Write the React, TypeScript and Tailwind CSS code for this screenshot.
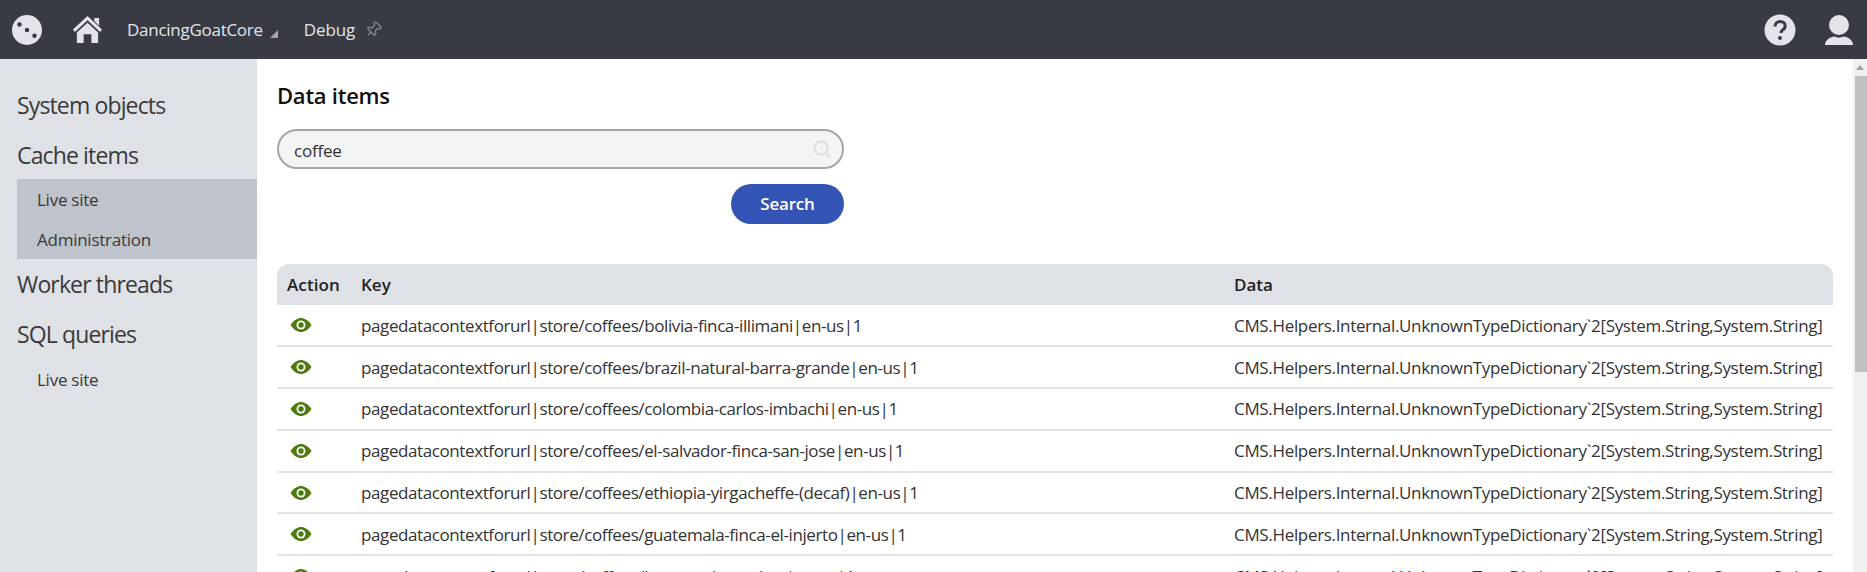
import React from 'react';
import { Search as SearchIcon, Pin } from 'lucide-react';

const keys = [
  'pagedatacontextforurl|store/coffees/bolivia-finca-illimani|en-us|1',
  'pagedatacontextforurl|store/coffees/brazil-natural-barra-grande|en-us|1',
  'pagedatacontextforurl|store/coffees/colombia-carlos-imbachi|en-us|1',
  'pagedatacontextforurl|store/coffees/el-salvador-finca-san-jose|en-us|1',
  'pagedatacontextforurl|store/coffees/ethiopia-yirgacheffe-(decaf)|en-us|1',
  'pagedatacontextforurl|store/coffees/guatemala-finca-el-injerto|en-us|1',
  'pagedatacontextforurl|store/coffees/kenya-gakuyuni-aa|en-us|1',
];

const dataType = 'CMS.Helpers.Internal.UnknownTypeDictionary`2[System.String,System.String]';

const EyeIcon = () => (
  <svg viewBox="0 0 22 16" className="w-[22px] h-4" fill="none">
    <path d="M0.500 8C4 3 7.500 1 11 1S18 3 21.500 8C18 13 14.500 15 11 15S4 13 0.500 8Z" fill="#4c7a0f" />
    <circle cx="11" cy="8" r="4.500" fill="#fff" />
    <circle cx="11" cy="8" r="2.700" fill="#4c7a0f" />
  </svg>
);

const Logo = () => (
  <svg viewBox="0 0 32 32" className="w-[30px] h-[30px]">
    <circle cx="16" cy="16" r="16" fill="#e2e4e9" />
    <circle cx="8" cy="10" r="2.400" fill="#383b43" />
    <circle cx="16" cy="16" r="2.400" fill="#383b43" />
    <circle cx="24" cy="22" r="2.400" fill="#383b43" />
  </svg>
);

const HomeIcon = () => (
  <svg viewBox="0 0 32 30" className="w-[31px] h-[29px]">
    <path d="M16 1 L31 15 L29 17.500 L16 5.500 L3 17.500 L1 15 Z" fill="#e2e4e9" />
    <path d="M23 3h5v8l-5-4.700Z" fill="#e2e4e9" />
    <path d="M5 18 L16 8 L27 18 V29 H20 V20 H12 V29 H5 Z" fill="#e2e4e9" />
  </svg>
);

const HelpIcon = () => (
  <svg viewBox="0 0 32 32" className="w-8 h-8">
    <circle cx="16" cy="16" r="15.500" fill="#e2e4e9" />
    <path d="M11 12.500c0-3 2.200-5 5.200-5s5 1.800 5 4.500c0 2-1 3-2.600 4-1.200.8-1.600 1.400-1.600 3" fill="none" stroke="#383b43" strokeWidth="3" />
    <circle cx="16" cy="24" r="2" fill="#383b43" />
  </svg>
);

const UserIcon = () => (
  <svg viewBox="0 0 28 30" className="w-[28px] h-[30px]">
    <circle cx="14" cy="10" r="10" fill="#e2e4e9" />
    <path d="M0 30 C0 25 5 22 10 21.500 C12 23 16 23 18 21.500 C23 22 28 25 28 30 Z" fill="#e2e4e9" />
  </svg>
);

export default function App() {
  return (
    <div className="h-[572px] w-full overflow-hidden flex flex-col bg-white text-[#333] font-['Open_Sans','Noto_Sans',sans-serif]">
      <header className="h-[59px] shrink-0 bg-[#383b43] flex items-center text-[#e2e4e9]">
        <div className="ml-3"><Logo /></div>
        <div className="ml-[30px]"><HomeIcon /></div>
        <span className="ml-[24px] text-[17px] tracking-[-0.27px]">DancingGoatCore</span>
        <span className="ml-[7px] mt-2 w-0 h-0 border-l-[8px] border-l-transparent border-b-[8px] border-b-[#a5a5a8]" />
        <span className="ml-[26px] text-[17px] tracking-[-0.1px]">Debug</span>
        <Pin size={17} className="ml-[10px] text-[#83858b] rotate-45" />
        <div className="ml-auto mr-[7px] flex items-center gap-[29px]">
          <HelpIcon />
          <UserIcon />
        </div>
        <div className="w-[7px]" />
      </header>

      <div className="flex flex-1 min-h-0">
        <aside className="w-[257px] shrink-0 bg-[#dee1e6] pt-5">
          <div className="pl-[17px] h-[52px] flex items-center text-[23px] tracking-[-0.86px] text-[#3a3a3a]">System objects</div>
          <div className="pl-[17px] h-[48px] flex items-center text-[23px] tracking-[-0.86px] text-[#3a3a3a]">Cache items</div>
          <div className="ml-[17px] bg-[#bfc3cc] h-[80px] text-[17px] tracking-[-0.25px] text-[#3a3a3a]">
            <div className="pl-5 pt-[2px] h-10 flex items-center">Live site</div>
            <div className="pl-5 pt-[2px] h-10 flex items-center">Administration</div>
          </div>
          <div className="pl-[17px] h-[50px] flex items-center text-[23px] tracking-[-0.86px] text-[#3a3a3a]">Worker threads</div>
          <div className="pl-[17px] h-[50px] flex items-center text-[23px] tracking-[-0.86px] text-[#3a3a3a]">SQL queries</div>
          <div className="pl-[37px] pt-[2px] h-[40px] flex items-center text-[17px] tracking-[-0.25px] text-[#3a3a3a]">Live site</div>
        </aside>

        <main className="flex-1 min-w-0 pl-5 pr-5 pt-[22px]">
          <h1 className="text-[22px] font-semibold text-[#111] tracking-[-0.25px] leading-[28px]">Data items</h1>
          <div className="mt-5 w-[567px]">
            <div className="h-10 rounded-full border-2 border-[#a3a6ad] bg-[#f2f4f6] flex items-center pl-[15px] pr-[10px] text-[17px] tracking-[-0.2px]">
              <span className="flex-1 pt-1">coffee</span>
              <SearchIcon size={20} strokeWidth={3} className="text-[#dfe1e5]" />
            </div>
            <div className="flex justify-end mt-[15px]">
              <button className="w-[113px] h-10 rounded-full bg-[#3353b5] text-white text-[17px] font-semibold tracking-[-0.2px]">Search</button>
            </div>
          </div>
          <div className="mt-10">
            <div className="h-[41px] bg-[#dee1e6] rounded-t-[12px] flex items-center text-[17px] font-semibold text-[#222]">
              <div className="w-[84px] pl-[10px] tracking-[0.1px]">Action</div>
              <div className="w-[873px]">Key</div>
              <div>Data</div>
            </div>
            {keys.map(k => (
              <div key={k} className="h-[41.9px] shrink-0 border-b-2 border-[#e2e4e8] flex items-center text-[17px] text-[#333]">
                <div className="w-[84px] pl-[13px] flex items-center"><EyeIcon /></div>
                <div className="w-[873px] pt-[1px] whitespace-nowrap tracking-[-0.4px]">{k}</div>
                <div className="pt-[1px] whitespace-nowrap tracking-[-0.33px]">{dataType}</div>
              </div>
            ))}
          </div>
        </main>

        <div className="w-[14px] shrink-0 bg-[#f1f1f1] flex flex-col">
          <div className="h-[17px] flex items-center justify-center">
            <span className="w-0 h-0 border-x-[4px] border-x-transparent border-b-[5px] border-b-[#a3a3a3]" />
          </div>
          <div className="ml-[2px] h-[296px] bg-[#c1c1c1]" />
        </div>
      </div>
    </div>
  );
}
